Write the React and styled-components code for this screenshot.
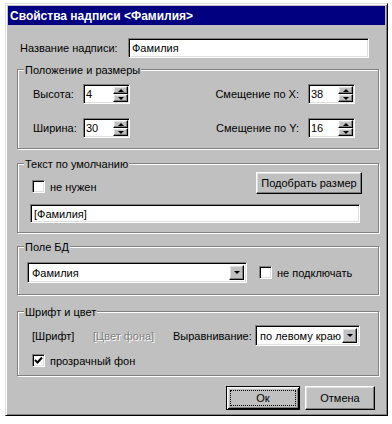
import React from "react";
import styled, { createGlobalStyle } from "styled-components";

const GlobalStyle = createGlobalStyle`
  body {
    margin: 0;
    background: #fff;
    font-family: "Liberation Sans", Arial, sans-serif;
    font-size: 11px;
    color: #000;
  }
`;

const raised = `
  border: 1px solid;
  border-color: #fff #000 #000 #fff;
  box-shadow: inset -1px -1px 0 #808080, inset 1px 1px 0 #dfdfdf;
`;

const sunken = `
  border: 1px solid;
  border-color: #808080 #fff #fff #808080;
  box-shadow: inset 1px 1px 0 #000, inset -1px -1px 0 #dfdfdf;
`;

const Dialog = styled.div`
  box-sizing: border-box;
  width: 383px;
  height: 413px;
  margin: 3px 0 0 5px;
  padding: 2px;
  background: #c0c0c0;
  border: 1px solid;
  border-color: #dfdfdf #000 #000 #dfdfdf;
  box-shadow: inset 1px 1px 0 #fff, inset -1px -1px 0 #808080;
  display: flex;
  flex-direction: column;
`;

const TitleBar = styled.div`
  height: 19px;
  background: #000080;
  color: #fff;
  font-size: 12px;
  font-weight: bold;
  display: flex;
  align-items: center;
  padding-left: 2px;
`;

const Body = styled.div`
  padding: 0 6px 0 9px;
  display: flex;
  flex-direction: column;
`;

const NameRow = styled.div`
  display: flex;
  align-items: center;
  margin-top: 13px;
  padding-left: 3px;
`;

const Label = styled.span`
  width: ${(p) => (p.$w ? `${p.$w}px` : "auto")};
  margin-right: ${(p) => p.$mr || 0}px;
  color: ${(p) => (p.$disabled ? "#808080" : "#000")};
  text-shadow: ${(p) => (p.$disabled ? "1px 1px 0 #fff" : "none")};
  white-space: nowrap;
  flex-shrink: 0;
`;

const TextField = styled.div`
  ${sunken};
  box-sizing: border-box;
  width: ${(p) => p.$w}px;
  height: ${(p) => p.$h}px;
  margin-top: ${(p) => p.$mt || 0}px;
  background: #fff;
  padding: 0 3px;
  display: flex;
  align-items: center;
`;

const Group = styled.div`
  border: 1px solid #808080;
  box-shadow: inset 1px 1px 0 #fff, 1px 1px 0 #fff;
  margin-top: ${(p) => p.$mt}px;
  padding-bottom: ${(p) => p.$pb}px;
`;

const Caption = styled.div`
  display: table;
  margin: -7px 0 0 6px;
  padding: 0 1px;
  background: #c0c0c0;
  line-height: 14px;
`;

const GroupBody = styled.div`
  padding: ${(p) => p.$pad};
  display: flex;
  flex-direction: column;
`;

const Row = styled.div`
  display: flex;
  align-items: center;
  justify-content: ${(p) => p.$justify || "flex-start"};
  margin-top: ${(p) => p.$mt || 0}px;
`;

const Pair = styled.div`
  display: flex;
  align-items: center;
`;

const SpinBox = styled.div`
  ${sunken};
  box-sizing: border-box;
  width: 47px;
  height: 20px;
  padding: 1px;
  background: #fff;
  display: flex;
`;

const SpinValue = styled.div`
  flex: 1;
  padding-left: 1px;
  display: flex;
  align-items: center;
`;

const SpinButtons = styled.div`
  width: 15px;
  display: flex;
  flex-direction: column;
`;

const SpinHalf = styled.div`
  ${raised};
  flex: 1;
  background: #c0c0c0;
  display: flex;
  align-items: center;
  justify-content: center;
`;

const Arrow = styled.span`
  width: 0;
  height: 0;
  border-left: 3px solid transparent;
  border-right: 3px solid transparent;
  ${(p) =>
    p.$dir === "up"
      ? "border-bottom: 3px solid #000;"
      : "border-top: 3px solid #000;"}
`;

const Combo = styled.div`
  ${sunken};
  box-sizing: border-box;
  width: ${(p) => p.$w}px;
  height: 21px;
  padding: 2px;
  background: #fff;
  display: flex;
  flex-shrink: 0;
`;

const ComboText = styled.div`
  flex: 1;
  padding-left: 2px;
  display: flex;
  align-items: center;
  white-space: nowrap;
  overflow: hidden;
`;

const DropButton = styled.div`
  ${raised};
  width: 15px;
  box-sizing: border-box;
  background: #c0c0c0;
  display: flex;
  align-items: center;
  justify-content: center;
`;

const CheckLabel = styled.label`
  display: flex;
  align-items: center;
  margin-left: ${(p) => p.$ml || 0}px;
  align-self: ${(p) => p.$self || "auto"};
  margin-bottom: ${(p) => p.$mb || 0}px;
`;

const CheckBox = styled.span`
  ${sunken};
  box-sizing: border-box;
  width: 13px;
  height: 13px;
  background: #fff;
  margin-right: 5px;
  display: flex;
  align-items: center;
  justify-content: center;
`;

const Button = styled.div`
  box-sizing: border-box;
  width: ${(p) => p.$w}px;
  height: ${(p) => p.$h}px;
  background: #c0c0c0;
  display: flex;
  align-items: center;
  justify-content: center;
  white-space: nowrap;
  ${(p) =>
    p.$default
      ? `border: 1px solid #000;
         padding: 2px;
         box-shadow: inset 1px 1px 0 #fff, inset -1px -1px 0 #000,
           inset 2px 2px 0 #dfdfdf, inset -2px -2px 0 #808080;`
      : raised}
`;

const FocusRing = styled.span`
  flex: 1;
  align-self: stretch;
  margin: 1px;
  border: 1px dotted #000;
  display: flex;
  align-items: center;
  justify-content: center;
`;

const ButtonRow = styled.div`
  display: flex;
  justify-content: flex-end;
  gap: 5px;
  margin-top: 10px;
  padding-right: 4px;
`;

const Spinner = ({ value }) => (
  <SpinBox>
    <SpinValue>{value}</SpinValue>
    <SpinButtons>
      <SpinHalf>
        <Arrow $dir="up" />
      </SpinHalf>
      <SpinHalf>
        <Arrow $dir="down" />
      </SpinHalf>
    </SpinButtons>
  </SpinBox>
);

const Check = ({ checked, children, ...rest }) => (
  <CheckLabel {...rest}>
    <CheckBox>
      {checked && (
        <svg width="9" height="9" viewBox="0 0 9 9">
          <path d="M1 4 L3.5 6.5 L8 1.5" stroke="#000" strokeWidth="2" fill="none" />
        </svg>
      )}
    </CheckBox>
    {children}
  </CheckLabel>
);

const Select = ({ w, children }) => (
  <Combo $w={w}>
    <ComboText>{children}</ComboText>
    <DropButton>
      <Arrow $dir="down" />
    </DropButton>
  </Combo>
);

const App = () => {
  return (
    <>
      <GlobalStyle />
      <Dialog>
        <TitleBar>Свойства надписи &lt;Фамилия&gt;</TitleBar>
        <Body>
          <NameRow>
            <Label $w={108}>Название надписи:</Label>
            <TextField $w={241} $h={20}>Фамилия</TextField>
          </NameRow>

          <Group $mt={11} $pb={10}>
            <Caption>Положение и размеры</Caption>
            <GroupBody $pad="0 23px 0 15px">
              <Row $mt={7} $justify="space-between">
                <Pair>
                  <Label $w={50}>Высота:</Label>
                  <Spinner value="4" />
                </Pair>
                <Pair>
                  <Label $mr={9}>Смещение по X:</Label>
                  <Spinner value="38" />
                </Pair>
              </Row>
              <Row $mt={14} $justify="space-between">
                <Pair>
                  <Label $w={50}>Ширина:</Label>
                  <Spinner value="30" />
                </Pair>
                <Pair>
                  <Label $mr={9}>Смещение по Y:</Label>
                  <Spinner value="16" />
                </Pair>
              </Row>
            </GroupBody>
          </Group>

          <Group $mt={14} $pb={9}>
            <Caption>Текст по умолчанию</Caption>
            <GroupBody $pad="0 16px 0 12px">
              <Row $mt={1} $justify="space-between">
                <Check $ml={2} $self="flex-end" $mb={1}>не нужен</Check>
                <Button $w={106} $h={22}>Подобрать размер</Button>
              </Row>
              <TextField $w={330} $h={19} $mt={10}>[Фамилия]</TextField>
            </GroupBody>
          </Group>

          <Group $mt={13} $pb={11}>
            <Caption>Поле БД</Caption>
            <GroupBody $pad="0 0 0 9px">
              <Row $mt={8}>
                <Select w={220}>Фамилия</Select>
                <Check $ml={12}>не подключать</Check>
              </Row>
            </GroupBody>
          </Group>

          <Group $mt={16} $pb={8}>
            <Caption>Шрифт и цвет</Caption>
            <GroupBody $pad="0 0 0 14px">
              <Row $mt={6}>
                <Label $w={61}>[Шрифт]</Label>
                <Label $w={80} $disabled>[Цвет фона]</Label>
                <Label $w={82}>Выравнивание:</Label>
                <Select w={105}>по левому краю</Select>
              </Row>
              <Row $mt={8}>
                <Check checked>прозрачный фон</Check>
              </Row>
            </GroupBody>
          </Group>

          <ButtonRow>
            <Button $w={74} $h={24} $default>
              <FocusRing>Ок</FocusRing>
            </Button>
            <Button $w={70} $h={24}>Отмена</Button>
          </ButtonRow>
        </Body>
      </Dialog>
    </>
  );
};

export default App;
